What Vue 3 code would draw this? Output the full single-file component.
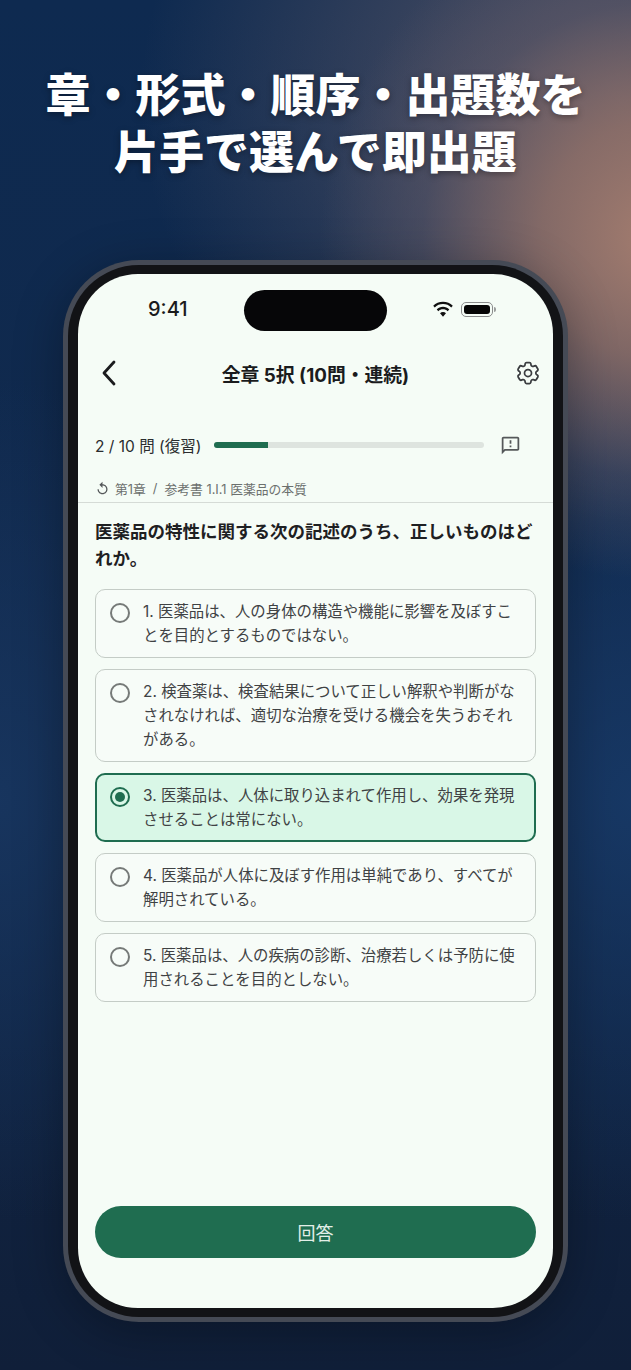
<script setup>
const options = [
  { text: '1. 医薬品は、人の身体の構造や機能に影響を及ぼすことを目的とするものではない。', selected: false },
  { text: '2. 検査薬は、検査結果について正しい解釈や判断がなされなければ、適切な治療を受ける機会を失うおそれがある。', selected: false },
  { text: '3. 医薬品は、人体に取り込まれて作用し、効果を発現させることは常にない。', selected: true },
  { text: '4. 医薬品が人体に及ぼす作用は単純であり、すべてが解明されている。', selected: false },
  { text: '5. 医薬品は、人の疾病の診断、治療若しくは予防に使用されることを目的としない。', selected: false },
]
</script>

<template>
  <div class="page">
    <h1 class="headline">章・形式・順序・出題数を<br />片手で選んで即出題</h1>
    <div class="phone">
      <div class="bezel">
        <div class="screen">
          <div class="island"></div>
          <div class="status">
            <span class="time">9:41</span>
            <div class="status-icons">
              <svg class="wifi" viewBox="0 0 20 15" fill="#111">
                <path d="M10 2.6c2.9 0 5.5 1.1 7.5 3l1.4-1.5C16.6 1.800 13.500.4 10 .4S3.400 1.800 1.100 4.100l1.400 1.500c2-1.900 4.600-3 7.500-3z" />
                <path d="M10 7.300c1.600 0 3.100.6 4.200 1.700l1.500-1.500C14.200 6 12.200 5.100 10 5.100s-4.200.9-5.700 2.400L5.800 9c1.100-1.100 2.600-1.700 4.200-1.700z" />
                <path d="M10 9.800c-1.100 0-2 .4-2.700 1.100L10 14l2.700-3.100c-.7-.7-1.600-1.100-2.700-1.100z" />
              </svg>
              <div class="battery"><div class="battery-fill"></div></div>
              <div class="battery-cap"></div>
            </div>
          </div>
          <header class="nav">
            <svg class="back" viewBox="0 0 14 26" fill="none" stroke="#1b1c1e" stroke-width="2.800" stroke-linecap="round" stroke-linejoin="round">
              <path d="M12 2 2 13l10 11" />
            </svg>
            <div class="nav-title">全章 5択 (10問・連続)</div>
            <svg class="gear" viewBox="0 0 24 24" fill="none" stroke="#3a3d40" stroke-width="1.500" stroke-linecap="round" stroke-linejoin="round">
              <path d="M9.594 3.94c.09-.542.56-.94 1.11-.94h2.593c.55 0 1.02.398 1.11.94l.213 1.281c.063.374.313.686.645.87.074.04.147.083.22.127.325.196.72.257 1.075.124l1.217-.456a1.125 1.125 0 011.37.49l1.296 2.247a1.125 1.125 0 01-.26 1.431l-1.003.827c-.293.24-.438.613-.431.992a6.759 6.759 0 010 .255c-.007.378.138.75.43.99l1.005.828c.424.35.534.954.26 1.43l-1.298 2.247a1.125 1.125 0 01-1.369.491l-1.217-.456c-.355-.133-.75-.072-1.076.124a6.57 6.57 0 01-.22.128c-.331.183-.581.495-.644.869l-.213 1.28c-.09.543-.56.941-1.11.941h-2.594c-.55 0-1.02-.398-1.11-.94l-.213-1.281c-.062-.374-.312-.686-.644-.87a6.52 6.52 0 01-.22-.127c-.325-.196-.72-.257-1.076-.124l-1.217.456a1.125 1.125 0 01-1.369-.49l-1.297-2.247a1.125 1.125 0 01.26-1.431l1.004-.827c.292-.24.437-.613.43-.992a6.932 6.932 0 010-.255c.007-.378-.138-.75-.43-.99l-1.004-.828a1.125 1.125 0 01-.26-1.43l1.297-2.247a1.125 1.125 0 011.37-.491l1.216.456c.356.133.751.072 1.076-.124.072-.044.146-.087.22-.128.332-.183.582-.495.644-.869l.214-1.281z" />
              <circle cx="12" cy="12" r="3" />
            </svg>
          </header>
          <div class="progress-row">
            <span class="progress-label">2 / 10 問 (復習)</span>
            <div class="track"><div class="track-fill" :style="{ width: '20%' }"></div></div>
            <svg class="report" viewBox="0 0 24 24" fill="#55585a">
              <path d="M20 2H4c-1.100 0-2 .9-2 2v18l4-4h14c1.100 0 2-.9 2-2V4c0-1.100-.9-2-2-2zm0 14H5.170L4 17.170V4h16v12z" />
              <path d="M11 12h2v2h-2zm0-6h2v4h-2z" />
            </svg>
          </div>
          <div class="crumbs">
            <svg class="replay" viewBox="0 0 24 24" fill="#55585a">
              <path d="M12 5V1L7 6l5 5V7c3.310 0 6 2.690 6 6s-2.690 6-6 6-6-2.690-6-6H4c0 4.420 3.580 8 8 8s8-3.580 8-8-3.580-8-8-8z" />
            </svg>
            <span>第1章</span>
            <span class="slash">/</span>
            <span>参考書 1.I.1 医薬品の本質</span>
          </div>
          <main class="body">
            <h2 class="question">医薬品の特性に関する次の記述のうち、正しいものはどれか。</h2>
            <div class="options">
              <div v-for="o in options" :key="o.text" class="option" :class="{ selected: o.selected }">
                <span class="radio"><span v-if="o.selected" class="dot"></span></span>
                <span class="option-text">{{ o.text }}</span>
              </div>
            </div>
            <button class="submit">回答</button>
          </main>
        </div>
      </div>
    </div>
  </div>
</template>

<style scoped>
.page {
  width: 631px;
  height: 1370px;
  overflow: hidden;
  box-sizing: border-box;
  padding-top: 67px;
  font-family: Inter, "Noto Sans CJK JP", "Noto Sans", sans-serif;
  background:
    radial-gradient(ellipse 340px 340px at 660px 240px, rgba(170, 128, 112, 0.95) 0%, rgba(150, 115, 105, 0.78) 35%, rgba(95, 88, 102, 0.45) 70%, rgba(40, 50, 80, 0) 100%),
    radial-gradient(ellipse 480px 420px at 620px 100px, rgba(120, 105, 112, 0.7), rgba(60, 70, 95, 0) 100%),
    radial-gradient(ellipse 420px 420px at 640px 800px, rgba(24, 58, 104, 0.9), rgba(24, 58, 104, 0) 100%),
    radial-gradient(ellipse 300px 420px at 0px 800px, rgba(24, 54, 96, 0.9), rgba(24, 54, 96, 0) 100%),
    linear-gradient(180deg, #0e2a50 0%, #11294c 50%, #101f39 100%);
}
.headline {
  margin: 0;
  height: 114px;
  text-align: center;
  color: #fff;
  font-size: 45px;
  font-weight: 900;
  line-height: 57px;
  text-shadow: 0 2px 6px rgba(0, 0, 0, 0.35);
}
.phone {
  margin: 79px 0 0 63px;
  width: 505px;
  height: 1062px;
  box-sizing: border-box;
  padding: 5px;
  border-radius: 76px;
  background: #454a55;
  box-shadow: 0 10px 50px rgba(0, 0, 0, 0.3);
}
.bezel {
  height: 100%;
  box-sizing: border-box;
  padding: 9px 10px;
  border-radius: 71px;
  background: #121316;
}
.screen {
  position: relative;
  height: 100%;
  display: flex;
  flex-direction: column;
  border-radius: 60px;
  background: #f5fcf6;
  overflow: hidden;
}
.island {
  position: absolute;
  left: 166px;
  top: 16px;
  width: 143px;
  height: 41px;
  border-radius: 21px;
  background: #060608;
}
.status {
  height: 70px;
  flex: none;
  display: flex;
  align-items: center;
  justify-content: space-between;
  padding: 0 59px 0 70px;
}
.time {
  font-family: Inter, sans-serif;
  font-size: 20px;
  font-weight: 500;
  color: #1a1a1c;
}
.status-icons {
  display: flex;
  align-items: center;
  margin-right: -2px;
}
.wifi {
  width: 22px;
  height: 17px;
  margin-right: 7px;
}
.battery {
  width: 32px;
  height: 15px;
  box-sizing: border-box;
  padding: 2px;
  border: 1px solid #8a8c8c;
  border-radius: 5px;
}
.battery-fill {
  height: 100%;
  border-radius: 3px;
  background: #050505;
}
.battery-cap {
  width: 2px;
  height: 5px;
  margin-left: 1px;
  border-radius: 0 2px 2px 0;
  background: #9a9c9c;
}
.nav {
  height: 58px;
  flex: none;
  display: grid;
  grid-template-columns: 1fr auto 1fr;
  align-items: center;
  padding: 0 11px;
}
.back {
  width: 14px;
  height: 26px;
  margin-left: 13px;
}
.nav-title {
  font-size: 18.800px;
  font-weight: 700;
  color: #1a1b1d;
}
.gear {
  width: 28px;
  height: 28px;
  justify-self: end;
}
.progress-row {
  flex: none;
  height: 22px;
  margin-top: 32px;
  display: flex;
  align-items: center;
  padding: 0 32px 0 17px;
}
.progress-label {
  font-size: 15.500px;
  color: #2a2c2e;
  white-space: nowrap;
  width: 119px;
  flex: none;
}
.track {
  width: 270px;
  height: 6px;
  flex: none;
  border-radius: 3px;
  background: #dee4df;
  overflow: hidden;
}
.track-fill {
  height: 100%;
  background: #1f6d50;
}
.report {
  width: 21px;
  height: 21px;
  flex: none;
  margin-left: 16px;
}
.crumbs {
  flex: none;
  margin-top: 11px;
  height: 36px;
  box-sizing: border-box;
  display: flex;
  align-items: center;
  padding: 7px 17px 0;
  font-size: 12.800px;
  color: #6c706e;
  border-bottom: 1px solid #d5dbd6;
}
.replay {
  width: 15px;
  height: 15px;
  margin: 0 5px 0 0;
}
.slash {
  margin: 0 7px;
}
.body {
  flex: 1;
  min-height: 0;
  display: flex;
  flex-direction: column;
  padding: 15px 17px 50px;
}
.question {
  margin: 0;
  font-size: 17.500px;
  font-weight: 700;
  line-height: 27px;
  color: #1e2022;
}
.options {
  margin-top: 17px;
  display: flex;
  flex-direction: column;
  gap: 11px;
}
.option {
  display: flex;
  align-items: flex-start;
  box-sizing: border-box;
  padding: 9.500px 18px 9.500px 14px;
  border: 1px solid #c4ccc6;
  border-radius: 10px;
  background: #f7fcf8;
}
.option.selected {
  border: 2px solid #1f6d50;
  background: #d9f7e7;
  padding: 8.500px 17px 8.500px 13px;
}
.radio {
  flex: none;
  width: 20px;
  height: 20px;
  margin-top: 3px;
  box-sizing: border-box;
  border: 2px solid #767a78;
  border-radius: 50%;
  display: flex;
  align-items: center;
  justify-content: center;
}
.selected .radio {
  border-color: #1f6d50;
}
.dot {
  width: 10px;
  height: 10px;
  border-radius: 50%;
  background: #1f6d50;
}
.option-text {
  margin-left: 13px;
  font-size: 15.400px;
  line-height: 24px;
  color: #3f4244;
}
.submit {
  margin-top: auto;
  height: 52px;
  flex: none;
  border: none;
  border-radius: 26px;
  background: #1f6d50;
  color: #e3efe8;
  font-family: inherit;
  font-size: 18px;
  font-weight: 400;
}
</style>
